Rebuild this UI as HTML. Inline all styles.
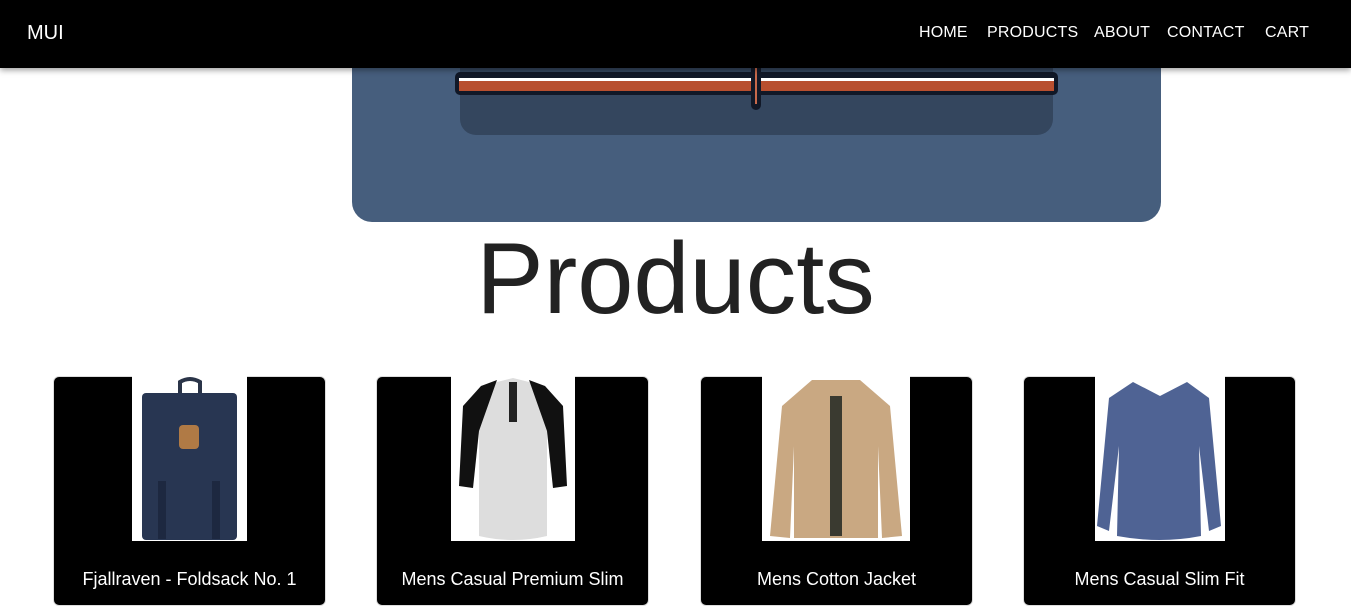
<!DOCTYPE html><html><head><style>
body{margin:0;width:1351px;height:586px;overflow:hidden;background:#fff;font-family:"Liberation Sans",Arial,sans-serif;position:relative}
.nav{position:absolute;left:0;top:0;width:1351px;height:68px;background:#000;box-shadow:0 2px 6px rgba(0,0,0,.4);z-index:5;color:#fff}
.logo{position:absolute;left:27px;top:22px;font-size:20px}
.links{position:absolute;top:24px;font-size:16px;letter-spacing:.2px}
.banner{position:absolute;left:352px;top:0;width:809px;height:222px;background:#465e7d;border-radius:0 0 20px 20px;overflow:hidden}
.inner{position:absolute;left:108px;top:60px;width:593px;height:75px;background:#34465e;border-radius:0 0 16px 16px}
.shelf{position:absolute;left:103px;top:72px;width:603px;height:23px;background:#111827;border-radius:5px}
.shelf i{position:absolute;left:4px;right:4px;top:6px;height:10px;background:#b84f2f;border-top:3px solid #fff}
.pole{position:absolute;left:399px;top:60px;width:10px;height:50px;background:#111827;border-radius:5px}
.pole i{position:absolute;left:4px;top:0;width:2px;height:44px;background:#c7694b}
h1{position:absolute;left:0;width:1351px;top:224px;margin:0;text-align:center;font-weight:400;font-size:101px;color:#222;line-height:110px}
.card{position:absolute;top:376px;width:273px;height:230px;background:#000;border-radius:6px;border:1px solid #ddd;box-sizing:border-box;color:#fff;text-align:center}
.img{position:absolute;top:-1px;height:165px;background:#fff}
.t{position:absolute;left:0;right:0;top:192px;font-size:18px}
</style></head><body>
<div class="nav"><div class="logo">MUI</div>
<span class="links" style="left:919px">HOME</span><span class="links" style="left:987px">PRODUCTS</span><span class="links" style="left:1094px">ABOUT</span><span class="links" style="left:1167px">CONTACT</span><span class="links" style="left:1265px">CART</span></div>
<div class="banner"><div class="inner"></div><div class="shelf"><i></i></div><div class="pole"><i></i></div></div>
<h1>Products</h1>
<div class="card" style="left:53px"><div class="img" style="left:78px;width:115px">
<svg width="115" height="165"><path d="M48 18 V6 Q58 0 68 6 V18" stroke="#2a3448" stroke-width="4" fill="none"/><rect x="10" y="17" width="95" height="147" rx="4" fill="#283652"/><rect x="47" y="49" width="20" height="24" rx="4" fill="#b07a45"/><rect x="26" y="105" width="8" height="58" fill="#1d2840"/><rect x="80" y="105" width="8" height="58" fill="#1d2840"/></svg></div><div class="t">Fjallraven - Foldsack No. 1</div></div>
<div class="card" style="left:376px"><div class="img" style="left:74px;width:124px">
<svg width="124" height="165"><path d="M30 10 L62 2 L94 10 L108 30 L114 110 L102 112 L96 55 L96 160 Q62 168 28 160 L28 55 L22 112 L10 110 L14 30 Z" fill="#ddd"/><path d="M30 10 L46 4 L28 55 L22 112 L8 110 L12 30Z M94 10 L78 4 L96 55 L102 112 L116 110 L112 30Z" fill="#111"/><rect x="58" y="6" width="8" height="40" fill="#222"/></svg></div><div class="t">Mens Casual Premium Slim</div></div>
<div class="card" style="left:700px"><div class="img" style="left:61px;width:148px">
<svg width="148" height="165"><path d="M50 4 L98 4 L128 30 L140 160 L120 162 L116 70 L116 162 L32 162 L32 70 L28 162 L8 160 L20 30 Z" fill="#c9a882"/><rect x="68" y="20" width="12" height="140" fill="#3a3a30"/></svg></div><div class="t">Mens Cotton Jacket</div></div>
<div class="card" style="left:1023px"><div class="img" style="left:71px;width:130px">
<svg width="130" height="165"><path d="M38 6 L65 20 L92 6 L114 22 L126 150 L114 155 L104 70 L106 160 Q65 168 22 160 L24 70 L14 155 L2 150 L14 22 Z" fill="#4f6394"/></svg></div><div class="t">Mens Casual Slim Fit</div></div>
</body></html>
